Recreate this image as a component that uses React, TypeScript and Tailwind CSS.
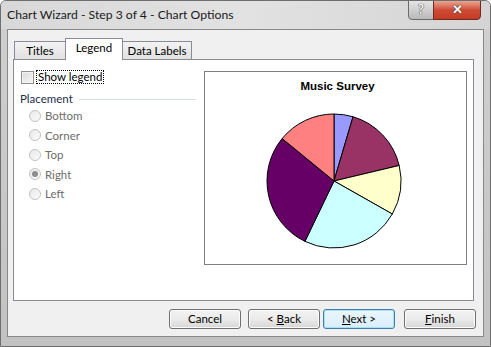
import React from 'react';

const FONT = { fontFamily: 'Lato, "Noto Sans", Arial, sans-serif' };

const SLICES: { from: number; to: number; color: string }[] = [
  { from: 0, to: 16.5, color: '#9999ff' },
  { from: 16.5, to: 76.6, color: '#993366' },
  { from: 76.6, to: 119.5, color: '#ffffcc' },
  { from: 119.5, to: 205.7, color: '#ccffff' },
  { from: 205.7, to: 309.3, color: '#660066' },
  { from: 309.3, to: 360, color: '#ff8080' },
];

function slicePath(cx: number, cy: number, r: number, a0: number, a1: number) {
  const pt = (a: number) => {
    const rad = (a * Math.PI) / 180;
    return [cx + r * Math.sin(rad), cy - r * Math.cos(rad)];
  };
  const [x0, y0] = pt(a0);
  const [x1, y1] = pt(a1);
  const large = a1 - a0 > 180 ? 1 : 0;
  return `M${cx},${cy} L${x0.toFixed(2)},${y0.toFixed(2)} A${r},${r} 0 ${large} 1 ${x1.toFixed(2)},${y1.toFixed(2)} Z`;
}

const Radio: React.FC<{ label: string; checked?: boolean }> = ({ label, checked }) => (
  <div className="flex items-center h-[19.5px]">
    <span className="w-[12px] h-[12px] rounded-full border border-[#c2c2c2] bg-gradient-to-br from-[#e8e8e8] to-[#fbfbfb] flex items-center justify-center">
      {checked && <span className="w-[6px] h-[6px] rounded-full bg-[#8c8c8c]" />}
    </span>
    <span className="ml-[4px] text-[11.5px] text-[#6d6d6d] leading-none">{label}</span>
  </div>
);

const WinButton: React.FC<{ children: React.ReactNode; focused?: boolean }> = ({ children, focused }) => (
  <button
    className={
      'w-[72px] h-[20px] rounded-[3px] border text-[11.5px] text-black leading-none flex items-center justify-center ' +
      (focused
        ? 'border-[#3c7fb1] bg-gradient-to-b from-[#eaf6fd] to-[#d9eefa] shadow-[inset_0_0_0_1px_#a8e0f8]'
        : 'border-[#707070] bg-gradient-to-b from-[#f2f2f2] via-[#ebebeb] to-[#d6d6d6] shadow-[inset_0_0_0_1px_#fcfcfc]')
    }
  >
    <span>{children}</span>
  </button>
);

export default function App() {
  const cx = 129;
  const cy = 88;
  const r = 67;
  return (
    <div
      className="w-[491px] h-[347px] flex flex-col bg-gradient-to-b from-[#d0d0d0] to-[#c2c2c2] rounded-t-[6px] border border-[#6e6e6e] overflow-hidden"
      style={FONT}
    >
      {/* Title bar */}
      <div className="h-[28px] flex items-start justify-between bg-gradient-to-r from-[#d8d8d8] via-[#e2e2e2] to-[#d4d4d4]">
        <span className="ml-[6px] mt-[6px] text-[12.2px] text-[#1a1a1a] leading-[16px]">
          Chart Wizard - Step 3 of 4 - Chart Options
        </span>
        <div className="flex mr-[9px] -mt-px">
          <div className="w-[26px] h-[20px] rounded-bl-[4px] border border-[#6b6b6b] bg-gradient-to-b from-[#e4e4e4] via-[#cfcfcf] to-[#b9b9b9] flex items-center justify-center text-[13px] font-bold text-white [text-shadow:0_0_1px_#222,0_0_1px_#222]">
            ?
          </div>
          <div className="w-[48px] h-[20px] -ml-px rounded-br-[4px] border border-[#6b2a22] bg-gradient-to-b from-[#e8a493] via-[#cf4a34] to-[#c43b24] flex items-center justify-center text-[13px] font-bold text-white [text-shadow:0_0_1px_#222,0_0_1px_#222]">
            ✕
          </div>
        </div>
      </div>

      {/* Client area */}
      <div className="mx-[6px] h-[308px] bg-[#f0f0f0] border border-[#888] flex flex-col">
        {/* Tabs */}
        <div className="flex items-end ml-[6px] mt-[8px] h-[21px] text-[11.5px] text-black">
          <div className="w-[52px] h-[18px] border border-b-0 border-[#898c95] bg-gradient-to-b from-[#f3f3f3] to-[#e1e1e1] flex items-center justify-center">
            Titles
          </div>
          <div className="relative z-10 -ml-px w-[58px] h-[22px] -mb-px border border-b-0 border-[#898c95] bg-white flex items-center justify-center pb-[3px]">
            Legend
          </div>
          <div className="-ml-px w-[70px] h-[18px] border border-b-0 border-[#898c95] bg-gradient-to-b from-[#f3f3f3] to-[#e1e1e1] flex items-center justify-center">
            Data Labels
          </div>
        </div>

        {/* Tab panel */}
        <div className="ml-[5px] w-[461px] h-[242px] border border-[#898c95] bg-white flex">
          <div className="flex-1 flex flex-col pt-[10px]">
            <div className="flex items-center ml-[7px] h-[14px]">
              <span className="w-[13px] h-[13px] border border-[#8e8f8f] bg-gradient-to-br from-[#dcdcdc] to-[#f6f6f6] shadow-[inset_0_0_0_1px_#f4f4f4]" />
              <span className="ml-[2px] h-[14px] px-[1px] border border-dotted border-black text-[11.5px] leading-[12px] text-black">
                Show legend
              </span>
            </div>
            <div className="flex items-center ml-[6px] mr-[8px] mt-[8px] h-[14px]">
              <span className="text-[11.5px] text-[#1e2e4e] leading-none">Placement</span>
              <span className="ml-[6px] flex-1 h-px bg-[#d5dfe5]" />
            </div>
            <div className="flex flex-col ml-[15px]">
              <Radio label="Bottom" />
              <Radio label="Corner" />
              <Radio label="Top" />
              <Radio label="Right" checked />
              <Radio label="Left" />
            </div>
          </div>

          {/* Chart preview */}
          <div className="mt-[11px] mr-[6px] w-[263px] h-[194px] border border-[#808080] bg-white flex flex-col items-center">
            <div
              className="mt-[8px] h-[13px] text-[11.5px] font-bold text-black leading-[13px] pl-[4px]"
              style={{ fontFamily: '"Liberation Sans", Arial, sans-serif' }}
            >
              Music Survey
            </div>
            <svg width="261" height="171" viewBox="0 0 261 171">
              {SLICES.map(s => (
                <path
                  key={s.color}
                  d={slicePath(cx, cy, r, s.from, s.to)}
                  fill={s.color}
                  stroke="#000"
                  strokeWidth="1"
                  strokeLinejoin="round"
                />
              ))}
            </svg>
          </div>
        </div>

        {/* Buttons */}
        <div className="flex justify-end mt-[8px] mr-[7px]">
          <WinButton>Cancel</WinButton>
          <div className="ml-[7px]">
            <WinButton>
              &lt; <u>B</u>ack
            </WinButton>
          </div>
          <div className="ml-[3px]">
            <WinButton focused>
              <u>N</u>ext &gt;
            </WinButton>
          </div>
          <div className="ml-[9px]">
            <WinButton>
              <u>F</u>inish
            </WinButton>
          </div>
        </div>
      </div>
      <div className="flex-1" />
    </div>
  );
}
